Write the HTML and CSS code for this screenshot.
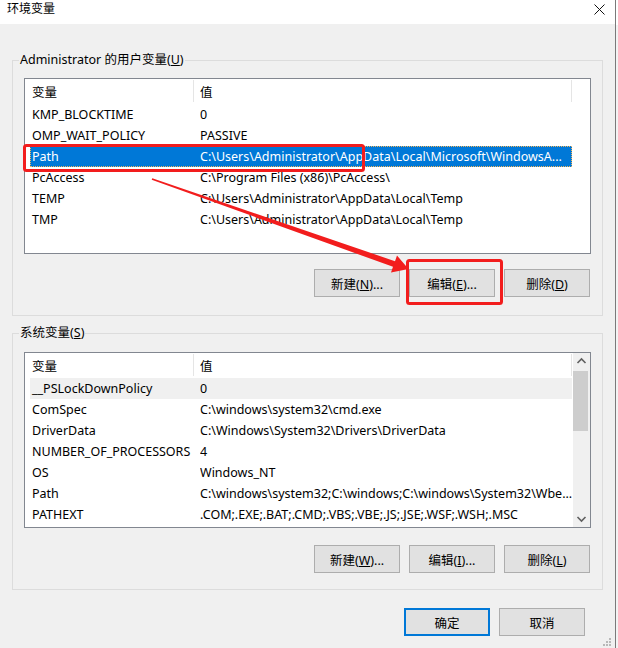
FILE: index.html
```html
<!DOCTYPE html>
<html lang="zh-CN">
<head>
<meta charset="utf-8">
<title>环境变量</title>
<link rel="stylesheet" href="styles.css">
</head>
<body>
<div class="screen">
  <div class="window">
    <div class="titlebar">
      <span class="title">环境变量</span>
      <svg class="close" width="11" height="11" viewBox="0 0 11 11"><path d="M0.5 0.5 L10.5 10.5 M10.5 0.5 L0.5 10.5" stroke="#111" stroke-width="1" fill="none"/></svg>
    </div>
    <div class="body">
      <fieldset class="group group-user">
        <legend>Administrator 的用户变量(<u>U</u>)</legend>
        <div class="list">
          <div class="list-main">
            <div class="list-head"><span class="h1">变量</span><span class="h2">值</span></div>
            <div class="rows">
              <div class="row"><span class="c1">KMP_BLOCKTIME</span><span class="c2">0</span></div>
              <div class="row"><span class="c1">OMP_WAIT_POLICY</span><span class="c2">PASSIVE</span></div>
              <div class="row selected"><span class="c1">Path</span><span class="c2">C:\Users\Administrator\AppData\Local\Microsoft\WindowsA...</span></div>
              <div class="row"><span class="c1">PcAccess</span><span class="c2">C:\Program Files (x86)\PcAccess\</span></div>
              <div class="row"><span class="c1">TEMP</span><span class="c2">C:\Users\Administrator\AppData\Local\Temp</span></div>
              <div class="row"><span class="c1">TMP</span><span class="c2">C:\Users\Administrator\AppData\Local\Temp</span></div>
            </div>
          </div>
        </div>
        <div class="buttons">
          <button class="btn">新建(<u>N</u>)...</button>
          <button class="btn">编辑(<u>E</u>)...</button>
          <button class="btn">删除(<u>D</u>)</button>
        </div>
      </fieldset>

      <fieldset class="group group-sys">
        <legend>系统变量(<u>S</u>)</legend>
        <div class="list">
          <div class="list-main">
            <div class="list-head"><span class="h1">变量</span><span class="h2">值</span></div>
            <div class="rows">
              <div class="row hover"><span class="c1">__PSLockDownPolicy</span><span class="c2">0</span></div>
              <div class="row"><span class="c1">ComSpec</span><span class="c2">C:\windows\system32\cmd.exe</span></div>
              <div class="row"><span class="c1">DriverData</span><span class="c2">C:\Windows\System32\Drivers\DriverData</span></div>
              <div class="row"><span class="c1">NUMBER_OF_PROCESSORS</span><span class="c2">4</span></div>
              <div class="row"><span class="c1">OS</span><span class="c2">Windows_NT</span></div>
              <div class="row"><span class="c1">Path</span><span class="c2">C:\windows\system32;C:\windows;C:\windows\System32\Wbe...</span></div>
              <div class="row"><span class="c1">PATHEXT</span><span class="c2">.COM;.EXE;.BAT;.CMD;.VBS;.VBE;.JS;.JSE;.WSF;.WSH;.MSC</span></div>
            </div>
          </div>
          <div class="scrollbar">
            <svg class="chev" width="17" height="17" viewBox="0 0 17 17"><path d="M4.5 10 L8.5 6 L12.5 10" stroke="#606060" stroke-width="1.6" fill="none"/></svg>
            <div class="track"><div class="thumb"></div></div>
            <svg class="chev" width="17" height="17" viewBox="0 0 17 17"><path d="M4.5 7 L8.5 11 L12.5 7" stroke="#606060" stroke-width="1.6" fill="none"/></svg>
          </div>
        </div>
        <div class="buttons">
          <button class="btn">新建(<u>W</u>)...</button>
          <button class="btn">编辑(<u>I</u>)...</button>
          <button class="btn">删除(<u>L</u>)</button>
        </div>
      </fieldset>

      <div class="dialog-buttons">
        <button class="btn default">确定</button>
        <button class="btn">取消</button>
      </div>
    </div>
    <svg class="grip" width="8" height="8" viewBox="0 0 8 8"><rect x="6" y="0" width="2" height="2" fill="#b8b8b8"/><rect x="3" y="3" width="2" height="2" fill="#b8b8b8"/><rect x="6" y="3" width="2" height="2" fill="#b8b8b8"/><rect x="0" y="6" width="2" height="2" fill="#b8b8b8"/><rect x="3" y="6" width="2" height="2" fill="#b8b8b8"/><rect x="6" y="6" width="2" height="2" fill="#b8b8b8"/></svg>
  </div>
  <div class="outside"></div>
</div>

<svg class="annot" width="618" height="648" viewBox="0 0 618 648">
  <rect x="24.5" y="145.5" width="339" height="25" rx="2" ry="2" fill="none" stroke="#f21d1d" stroke-width="3"/>
  <rect x="407.5" y="260.5" width="94" height="43" rx="2" ry="2" fill="none" stroke="#f21d1d" stroke-width="3"/>
  <polygon points="152.3,178.3 395,261.2 397,255.5 408.5,269 391,272.5 393,266.8 151.7,179.7" fill="#f21d1d"/>
</svg>
</body>
</html>
```
FILE: styles.css
```css
* { box-sizing: border-box; }
html, body { margin: 0; padding: 0; }
body {
  width: 618px;
  height: 648px;
  overflow: hidden;
  background: #f0f0f0;
  font-family: "Noto Sans", "Noto Sans CJK SC", sans-serif;
  font-size: 12.5px;
  color: #000;
  position: relative;
}
.screen {
  display: flex;
  width: 618px;
  height: 648px;
}
.window {
  position: relative;
  width: 616px;
  height: 648px;
  background: #f0f0f0;
  border-right: 1px solid #7a7a7a;
  display: flex;
  flex-direction: column;
}
.outside {
  flex: 1;
  background: linear-gradient(#ffffff 0 25px, #f3f3f3 25px);
}
.titlebar {
  height: 24px;
  background: #fff;
  display: flex;
  align-items: flex-start;
  justify-content: space-between;
}
.title {
  padding-left: 7px;
  line-height: 18px;
  font-size: 12px;
}
.close {
  margin-top: 4px;
  margin-right: 10px;
}
.body {
  padding: 28px 12px 0 12px;
}
.group {
  margin: 0;
  padding: 0 11px;
  border: 1px solid #dcdcdc;
  min-width: 0;
  width: 591px;
}
.group legend {
  margin-left: -5px;
  padding: 0 1px;
  line-height: 16px;
}
.group-user { padding-top: 10px; padding-bottom: 18px; }
.group-sys { margin-top: 9px; padding-top: 11px; padding-bottom: 16px; }
.group-user .buttons { margin-top: 15px; }
.group-sys .buttons { margin-top: 17px; }

.list {
  height: 176px;
  border: 1px solid #828790;
  background: #fff;
  display: flex;
}
.list-main {
  flex: 1;
  min-width: 0;
}
.list-head {
  height: 23px;
  display: flex;
  width: 547px;
}
.h1, .h2 {
  display: flex;
  align-items: center;
  margin: 1px 0 0;
  border-right: 1px solid #e5e5e5;
}
.h1 { width: 169px; padding-left: 7px; }
.h2 { width: 378px; padding-left: 6px; }
.rows { padding: 2px 0 0 5px; }
.row {
  display: flex;
  height: 21px;
  width: 542px;
  align-items: center;
  white-space: nowrap;
}
.c1 { width: 170px; padding-left: 2px; flex: none; }
.c2 { flex: 1; overflow: hidden; }
.row.selected {
  background: #0078d7;
  color: #fff;
  outline: 1px dotted #f4b55a;
  outline-offset: -1px;
}
.row.hover { background: #f0f0f0; }

.scrollbar {
  width: 17px;
  background: #f0f0f0;
  display: flex;
  flex-direction: column;
}
.chev { flex: none; display: block; }
.track { flex: 1; padding: 1px 1px 0 0; }
.thumb { height: 60px; background: #cdcdcd; margin-left: 0; width: 15px; }

.buttons, .dialog-buttons {
  display: flex;
  justify-content: flex-end;
  gap: 9px;
}
.buttons { padding-right: 1px; }
.btn {
  width: 86px;
  height: 28px;
  background: #e1e1e1;
  border: 1px solid #adadad;
  font: inherit;
  color: #000;
  padding: 0;
  margin: 0;
}
.btn.default { border: 2px solid #0078d7; }
.dialog-buttons {
  margin-top: 18px;
  padding-right: 18px;
}
.grip {
  position: absolute;
  right: 4px;
  bottom: 2px;
}
.annot {
  position: absolute;
  left: 0;
  top: 0;
  pointer-events: none;
}
```
